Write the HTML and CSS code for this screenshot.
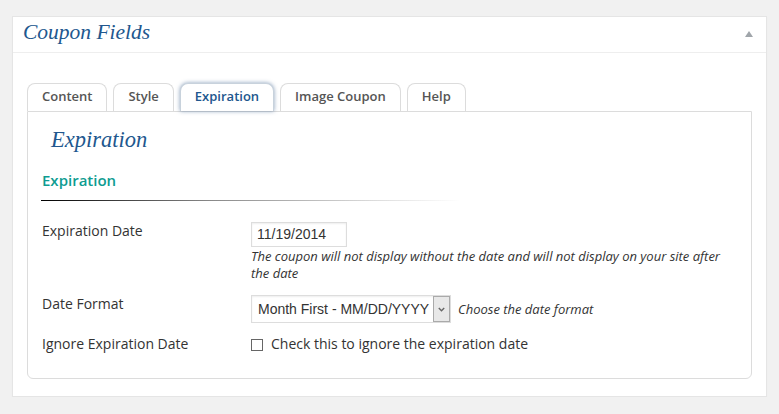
FILE: index.html
```html
<!DOCTYPE html>
<html>
<head>
<meta charset="utf-8">
<link rel="stylesheet" href="styles.css">
</head>
<body>
<div class="postbox">
  <div class="hndle">
    <h2 class="hndle-title">Coupon Fields</h2>
    <span class="toggle"></span>
  </div>
  <div class="inside">
    <ul class="tabs">
      <li class="tab">Content</li>
      <li class="tab">Style</li>
      <li class="tab active">Expiration</li>
      <li class="tab">Image Coupon</li>
      <li class="tab">Help</li>
    </ul>
    <div class="panel">
      <h3 class="panel-title">Expiration</h3>
      <h4 class="section-title">Expiration</h4>
      <div class="section-rule"></div>
      <div class="rows">
        <div class="row">
          <div class="label">Expiration Date</div>
          <div class="field">
            <div class="text-input">11/19/2014</div>
            <p class="desc">The coupon will not display without the date and will not display on your site after the date</p>
          </div>
        </div>
        <div class="row">
          <div class="label">Date Format</div>
          <div class="field inline">
            <div class="select">
              <span class="select-value">Month First - MM/DD/YYYY</span>
              <span class="select-arrow"><svg width="7" height="5" viewBox="0 0 7 5"><path d="M0.8 1 L3.5 3.8 L6.2 1" fill="none" stroke="#666" stroke-width="1.4"/></svg></span>
            </div>
            <span class="desc-inline">Choose the date format</span>
          </div>
        </div>
        <div class="row">
          <div class="label">Ignore Expiration Date</div>
          <div class="field inline">
            <span class="checkbox"></span>
            <span class="check-label">Check this to ignore the expiration date</span>
          </div>
        </div>
      </div>
    </div>
  </div>
</div>
</body>
</html>
```

FILE: styles.css
```css
html, body {
  margin: 0;
  padding: 0;
  background: #f1f1f1;
  font-family: "Open Sans", "Liberation Sans", sans-serif;
  color: #333;
}

.postbox {
  margin: 16px 12px 0 12px;
  background: #fff;
  border: 1px solid #e5e5e5;
  box-shadow: 0 1px 1px rgba(0, 0, 0, 0.04);
}

.hndle {
  display: flex;
  align-items: flex-start;
  justify-content: space-between;
  height: 35px;
  border-bottom: 1px solid #eee;
}

.hndle-title {
  margin: 0;
  padding-left: 10px;
  font-family: "Liberation Serif", serif;
  font-style: italic;
  font-weight: normal;
  font-size: 21.5px;
  line-height: 30px;
  color: #21578e;
}

.toggle {
  margin: 14px 13px 0 0;
  width: 0;
  height: 0;
  border-left: 4px solid transparent;
  border-right: 4px solid transparent;
  border-bottom: 6px solid #a0a5aa;
}

.inside {
  padding: 30px 14px 17px 14px;
}

.tabs {
  list-style: none;
  margin: 0;
  padding: 0;
  display: flex;
  gap: 6px;
  height: 28px;
}

.tab {
  height: 24px;
  padding: 0 14px 3px 14px;
  border: 1px solid #dcdcdc;
  border-bottom: none;
  border-radius: 8px 8px 0 0;
  background: #fff;
  font-size: 13px;
  font-weight: 600;
  line-height: 24px;
  color: #555;
}

.tab.active {
  color: #21578e;
  border-color: #c8d2dc;
  box-shadow: 0 0 4px rgba(40, 80, 130, 0.55);
  position: relative;
  z-index: 1;
}

.panel {
  border: 1px solid #dcdcdc;
  border-radius: 0 0 6px 6px;
  padding: 0 14px 24px 14px;
}

.panel-title {
  margin: 13px 0 0 9px;
  font-family: "Liberation Serif", serif;
  font-style: italic;
  font-weight: normal;
  font-size: 22.5px;
  line-height: 30px;
  color: #21578e;
}

.section-title {
  margin: 15px 0 0 0;
  font-size: 15px;
  font-weight: 600;
  line-height: 20px;
  color: #0e9c91;
}

.section-rule {
  margin: 10px 0 0 -1px;
  width: 420px;
  height: 1px;
  background: linear-gradient(to right, #000 0%, #888 40%, #ddd 80%, rgba(255,255,255,0) 100%);
}

.rows {
  margin-top: 20px;
  display: flex;
  flex-direction: column;
  gap: 11px;
}

.row {
  display: grid;
  grid-template-columns: 209px 1fr;
  align-items: start;
}

.label {
  font-size: 14px;
  line-height: 20px;
  color: #333;
}

.field.inline {
  display: flex;
  align-items: center;
}

.text-input {
  margin-top: 1px;
  box-sizing: border-box;
  width: 96px;
  height: 25px;
  border: 1px solid #ddd;
  box-shadow: inset 0 1px 2px rgba(0, 0, 0, 0.07);
  padding: 0 5px;
  font-family: "Liberation Sans", Arial, sans-serif;
  font-size: 14px;
  line-height: 23px;
  color: #333;
}

.desc {
  margin: 1px 0 1px 0;
  font-size: 13px;
  font-style: italic;
  line-height: 17px;
  color: #333;
}

.select {
  margin-top: 1px;
  box-sizing: border-box;
  width: 200px;
  height: 28px;
  border: 1px solid #ddd;
  box-shadow: inset 0 1px 2px rgba(0, 0, 0, 0.07);
  display: flex;
  align-items: stretch;
  justify-content: space-between;
  background: #fff;
}

.select-value {
  padding-left: 6px;
  font-family: "Liberation Sans", Arial, sans-serif;
  font-size: 14px;
  line-height: 26px;
  color: #333;
}

.select-arrow {
  box-sizing: border-box;
  width: 17px;
  border: 1px solid #aaa;
  background: #e8e8e8;
  display: flex;
  align-items: center;
  justify-content: center;
}

.desc-inline {
  margin-left: 7px;
  font-size: 13px;
  font-style: italic;
  color: #333;
}

.checkbox {
  box-sizing: border-box;
  width: 12px;
  height: 12px;
  border: 1px solid #666;
  background: #fff;
  margin-top: 1px;
}

.check-label {
  margin-left: 8px;
  font-size: 14px;
  line-height: 20px;
  color: #333;
}
```
